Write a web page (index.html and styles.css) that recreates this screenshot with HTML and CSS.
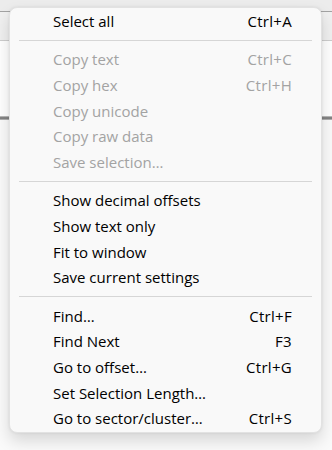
FILE: index.html
```html
<!DOCTYPE html>
<html lang="en">
<head>
  <meta charset="UTF-8" />
  <title>Hex Viewer Menu</title>
  <link rel="stylesheet" href="styles.css">
</head>
<body>
  <!-- Window behind the menu -->
  <div class="window">
    <div class="toolbar"></div>
    <div class="tab-band"></div>
    <div class="content-top"></div>
    <div class="content-rule"></div>
    <div class="content"></div>
  </div>

  <!-- Context menu -->
  <div class="context-menu">
    <div class="menu-item"><span>Select all</span><span class="shortcut">Ctrl+A</span></div>
    <div class="menu-sep"></div>
    <div class="menu-item disabled"><span>Copy text</span><span class="shortcut">Ctrl+C</span></div>
    <div class="menu-item disabled"><span>Copy hex</span><span class="shortcut">Ctrl+H</span></div>
    <div class="menu-item disabled"><span>Copy unicode</span></div>
    <div class="menu-item disabled"><span>Copy raw data</span></div>
    <div class="menu-item disabled"><span>Save selection…</span></div>
    <div class="menu-sep"></div>
    <div class="menu-item"><span>Show decimal offsets</span></div>
    <div class="menu-item"><span>Show text only</span></div>
    <div class="menu-item"><span>Fit to window</span></div>
    <div class="menu-item"><span>Save current settings</span></div>
    <div class="menu-sep"></div>
    <div class="menu-item"><span>Find…</span><span class="shortcut">Ctrl+F</span></div>
    <div class="menu-item"><span>Find Next</span><span class="shortcut">F3</span></div>
    <div class="menu-item"><span>Go to offset…</span><span class="shortcut">Ctrl+G</span></div>
    <div class="menu-item"><span>Set Selection Length…</span></div>
    <div class="menu-item"><span>Go to sector/cluster…</span><span class="shortcut">Ctrl+S</span></div>
  </div>
</body>
</html>
```

FILE: styles.css
```css
/*
  --------------------------------------------
  BASIC RESETS AND LAYOUT
  --------------------------------------------
*/
* {
  margin: 0;
  padding: 0;
  box-sizing: border-box;
}

body {
  font-family: "Open Sans", "Noto Sans", sans-serif;
  background-color: #ffffff;
  color: #000000;
  width: 332px;
  height: 450px;
  overflow: hidden;
  position: relative;
}

/*
  --------------------------------------------
  WINDOW BEHIND THE MENU
  --------------------------------------------
*/
.window {
  display: flex;
  flex-direction: column;
  height: 100%;
}

.toolbar {
  height: 12px;
  background-color: #ececec;
  border-bottom: 1px solid #a3a3a3;
}

.tab-band {
  height: 29px;
  background-color: #f0f0f0;
  border-bottom: 1px solid #cdcdcd;
}

.content-top {
  height: 75px;
  background-color: #ffffff;
}

.content-rule {
  height: 4px;
  background: linear-gradient(#d0d0d0, #6c6c6c 50%, #c4c4c4);
}

.content {
  flex: 1;
  background-color: #fafafa;
}

/*
  --------------------------------------------
  CONTEXT MENU
  --------------------------------------------
*/
.context-menu {
  position: absolute;
  left: 9px;
  top: 7px;
  width: 313px;
  background-color: #f9f9f9;
  border: 1px solid #e2e2e2;
  border-radius: 8px;
  padding: 0 0 1px;
  box-shadow: 0 8px 16px rgba(0, 0, 0, 0.14), 0 0 3px rgba(0, 0, 0, 0.08);
}

.menu-item {
  height: 25.6px;
  display: flex;
  justify-content: space-between;
  align-items: center;
  padding: 0 29px 0 43px;
  font-size: 15px;
  color: #000000;
  white-space: nowrap;
}

.menu-item.disabled {
  color: #a3a3a3;
}

.shortcut {
  letter-spacing: 0.3px;
}

.menu-sep {
  height: 1px;
  margin: 6px 9px;
  background-color: #d6d6d6;
}
```
